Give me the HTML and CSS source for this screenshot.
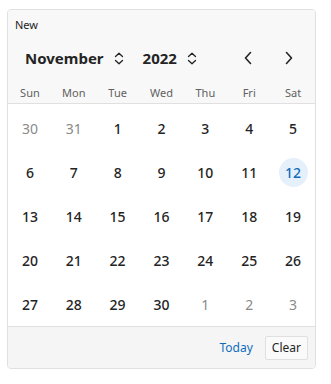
FILE: index.html
```html
<!DOCTYPE html>
<html lang="en">
<head>
    <meta charset="UTF-8">
    <meta name="viewport" content="width=device-width, initial-scale=1.0">
    <title>Date picker</title>
    <link rel="stylesheet" href="styles.css">
</head>
<body>
    <div class="picker">
        <div class="picker-header">
            <div class="label">New</div>
            <div class="nav">
                <button class="select month">
                    November
                    <svg class="updown" width="10" height="13" viewBox="0 0 10 13"><path d="M1.5 4.5 L5 1.2 L8.5 4.5 M1.5 8.5 L5 11.8 L8.5 8.5" /></svg>
                </button>
                <button class="select year">
                    2022
                    <svg class="updown" width="10" height="13" viewBox="0 0 10 13"><path d="M1.5 4.5 L5 1.2 L8.5 4.5 M1.5 8.5 L5 11.8 L8.5 8.5" /></svg>
                </button>
                <div class="arrows">
                    <button class="arrow"><svg width="10" height="14" viewBox="0 0 10 14"><path d="M7.5 1.5 L2.5 7 L7.5 12.5" /></svg></button>
                    <button class="arrow"><svg width="10" height="14" viewBox="0 0 10 14"><path d="M2.5 1.5 L7.5 7 L2.5 12.5" /></svg></button>
                </div>
            </div>
            <div class="weekdays">
                <span>Sun</span><span>Mon</span><span>Tue</span><span>Wed</span><span>Thu</span><span>Fri</span><span>Sat</span>
            </div>
        </div>

        <div class="days">
            <span class="day muted">30</span>
            <span class="day muted">31</span>
            <span class="day">1</span>
            <span class="day">2</span>
            <span class="day">3</span>
            <span class="day">4</span>
            <span class="day">5</span>

            <span class="day">6</span>
            <span class="day">7</span>
            <span class="day">8</span>
            <span class="day">9</span>
            <span class="day">10</span>
            <span class="day">11</span>
            <span class="day today"><b>12</b></span>

            <span class="day">13</span>
            <span class="day">14</span>
            <span class="day">15</span>
            <span class="day">16</span>
            <span class="day">17</span>
            <span class="day">18</span>
            <span class="day">19</span>

            <span class="day">20</span>
            <span class="day">21</span>
            <span class="day">22</span>
            <span class="day">23</span>
            <span class="day">24</span>
            <span class="day">25</span>
            <span class="day">26</span>

            <span class="day">27</span>
            <span class="day">28</span>
            <span class="day">29</span>
            <span class="day">30</span>
            <span class="day muted">1</span>
            <span class="day muted">2</span>
            <span class="day muted">3</span>
        </div>

        <div class="picker-footer">
            <a class="link" href="#">Today</a>
            <button class="clear">Clear</button>
        </div>
    </div>
</body>
</html>
```

FILE: styles.css
```css
:root {
    --text-color: #242424;
    --muted-color: #8a8a8a;
    --weekday-color: #616161;
    --brand-color: #0f6cbd;
    --header-bg: #f8f8f8;
    --footer-bg: #f5f5f5;
    --border-color: #e0e0e0;
}

* {
    margin: 0;
    padding: 0;
    box-sizing: border-box;
    font-family: 'Noto Sans', 'Open Sans', sans-serif;
}

body {
    background: #fff;
    color: var(--text-color);
    padding: 9px 15px 0 7px;
}

button {
    background: none;
    border: none;
    color: inherit;
    cursor: pointer;
}

.picker {
    width: 309px;
    border: 1px solid var(--border-color);
    border-radius: 4px;
    overflow: hidden;
}

.picker-header {
    background-color: var(--header-bg);
    border-bottom: 1px solid var(--border-color);
}

.label {
    padding: 8px 0 0 7px;
    font-size: 11px;
    line-height: 14px;
}

.nav {
    display: flex;
    align-items: center;
    height: 36px;
    margin-top: 8px;
    padding-left: 17px;
}

.select {
    display: flex;
    align-items: center;
    gap: 10px;
    font-size: 15px;
    font-weight: 700;
    line-height: 20px;
}

.month {
    margin-right: 19px;
}

.updown path,
.arrow path {
    fill: none;
    stroke: var(--text-color);
    stroke-width: 1.3;
    stroke-linecap: round;
    stroke-linejoin: round;
}

.arrow path {
    stroke-width: 1.6;
}

.arrows {
    display: flex;
    gap: 29px;
    margin-left: auto;
    margin-right: 20px;
}

.arrow {
    display: flex;
    width: 12px;
    justify-content: center;
}

.weekdays {
    display: grid;
    grid-template-columns: repeat(7, 1fr);
    height: 22px;
    align-items: center;
    margin-top: 5px;
}

.weekdays span {
    text-align: center;
    font-size: 11px;
    color: var(--weekday-color);
}

.days {
    display: grid;
    grid-template-columns: repeat(7, 1fr);
    grid-auto-rows: 44px;
    padding-top: 2px;
    background: #fff;
}

.day {
    display: flex;
    align-items: center;
    justify-content: center;
    font-size: 14px;
    font-weight: 500;
}

.day.muted {
    color: var(--muted-color);
    font-weight: 400;
}

.day.today b {
    display: flex;
    align-items: center;
    justify-content: center;
    width: 29px;
    height: 29px;
    border-radius: 50%;
    background-color: #e6f0fb;
    color: var(--brand-color);
    font-weight: 500;
}

.picker-footer {
    display: flex;
    align-items: center;
    justify-content: flex-end;
    gap: 12px;
    height: 42px;
    padding-right: 7px;
    background-color: var(--footer-bg);
    border-top: 1px solid var(--border-color);
}

.link {
    color: var(--brand-color);
    font-size: 12px;
    text-decoration: none;
}

.clear {
    height: 24px;
    padding: 0 6px;
    border: 1px solid var(--border-color);
    border-radius: 2px;
    background: #fafafa;
    font-size: 12px;
}
```
